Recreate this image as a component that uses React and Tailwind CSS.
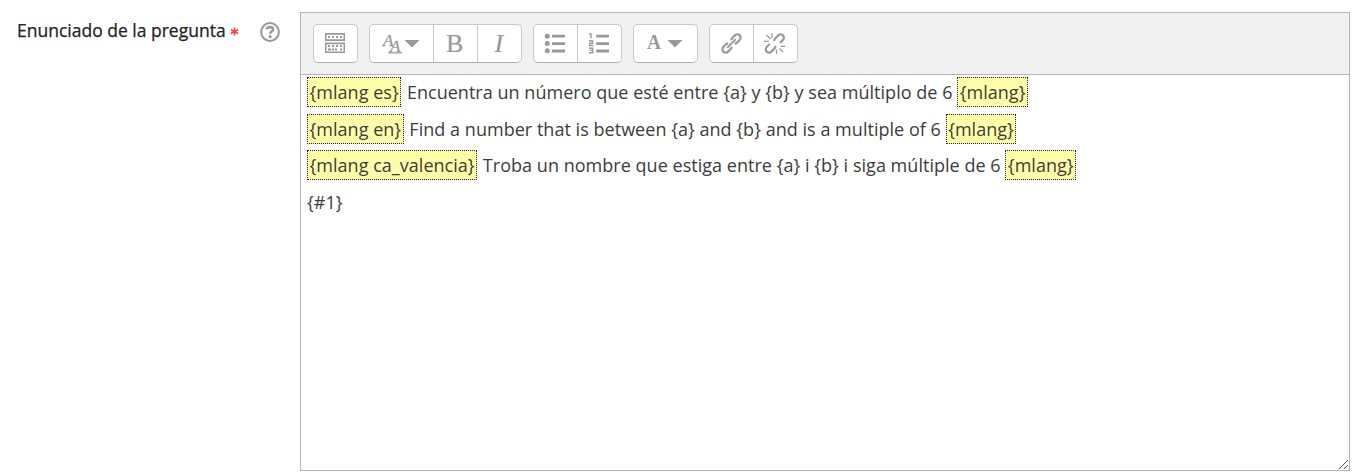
import React from "react";

function Group({ children }) {
  return (
    <div className="flex h-[39px] divide-x divide-[#c8c8c8] overflow-hidden rounded-[5px] border border-[#c8c8c8] border-b-[#b0b0b0] bg-white">
      {children}
    </div>
  );
}

function Button({ label, wide, children }) {
  return (
    <button aria-label={label} className={`flex h-full items-center justify-center pr-[2px] ${wide ? "w-16 last:w-[63px]" : "w-11 last:w-[43px]"}`}>
      <svg className="shrink-0 overflow-visible" width={wide ? 48 : 24} height="24" viewBox={wide ? "0 0 48 24" : "0 0 24 24"} fill="#999" stroke="none">
        {children}
      </svg>
    </button>
  );
}

function Tag({ children }) {
  return <span className="mr-px border border-dotted border-[#222] bg-[#ffffaa] px-[1.5px] pt-[2px] pb-[2px]">{children}</span>;
}

export default function App() {
  return (
    <div className="flex h-[473px] w-[1356px] bg-white pt-3 font-['Open_Sans',sans-serif] text-[#333]">
      <div className="flex w-[300px] shrink-0 items-start pl-[17px]">
        <label className="mt-[5px] whitespace-nowrap text-[17.5px] leading-[26px] text-[#222] [-webkit-text-stroke:0.25px_#222]">Enunciado de la pregunta</label>
        <svg className="mt-[15px] ml-1 shrink-0" width="9" height="9" viewBox="0 0 9 9" stroke="#ff4040" strokeWidth="1.5">
          <path d="M4.5 0.5v8M0.9 2.5l7.2 4M8.1 2.5l-7.2 4" />
        </svg>
        <svg className="mt-[10px] ml-[21px] shrink-0" width="20" height="20" viewBox="0 0 20 20" fill="none" stroke="#999">
          <circle cx="10" cy="10" r="8.9" strokeWidth="2" />
          <path d="M6.8 7.3c.6-3.1 6.3-2.8 6.3.2 0 2.1-3 2-3 4.3" strokeWidth="2.6" />
          <circle cx="10.1" cy="14.7" r="1.6" fill="#999" stroke="none" />
        </svg>
      </div>
      <div className="relative flex h-[459px] w-[1050px] flex-col border border-[#b5b5b5]">
        <div className="flex h-[62px] shrink-0 gap-[11px] border-b border-[#b5b5b5] bg-[#f1f1f1] pt-[11px] pl-3">
          <Group>
            <Button label="Mostrar más botones">
              <path fillRule="evenodd" d="M2 1h20v8H2zM3.5 2.7v4.6h17V2.7zM2 10.5h20V21H2zM3.5 12.2v7.2h17v-7.2z" />
              <path d="M5 4h2v2H5zM9 4h2v2H9zM13 4h2v2h-2zM17 4h2v2h-2zM5 13h2v2H5zM9 13h2v2H9zM13 13h2v2h-2zM17 13h2v2h-2zM5 16.5h3v2H5zM9 16.5h2v2H9zM12 16.5h2v2h-2zM17 16.5h2v2h-2z" />
            </Button>
          </Group>
          <Group>
            <Button label="Estilos de párrafo" wide>
              <text x="6" y="14" fontFamily="Liberation Serif" fontStyle="italic" fontSize="17" stroke="#999" strokeWidth=".3">A</text>
              <text x="13" y="20" fontFamily="Liberation Serif" fontStyle="italic" fontSize="17" stroke="#999" strokeWidth=".3">A</text>
              <path d="M11 20.3h14v1.2H11zM27.5 8h15l-7.5 7.5z" />
            </Button>
            <Button label="Negrita">
              <text x="3" y="20" fontFamily="Liberation Serif" fontSize="26" stroke="#999" strokeWidth=".2">B</text>
            </Button>
            <Button label="Cursiva">
              <text x="7.5" y="20" fontFamily="Liberation Serif" fontStyle="italic" fontSize="26" stroke="#999" strokeWidth=".2">I</text>
            </Button>
          </Group>
          <Group>
            <Button label="Lista sin ordenar">
              <circle cx="4.3" cy="4.2" r="2.5" /><circle cx="4.3" cy="11.5" r="2.5" /><circle cx="4.3" cy="18.8" r="2.5" />
              <path d="M9 2.8h13v2.8H9zM9 10.2h13V13H9zM9 17.6h13v2.8H9z" />
            </Button>
            <Button label="Lista ordenada">
              <path d="M9.2 2.8h12.8v2.8h-12.8zM9.2 10.2h12.8V13h-12.8zM9.2 17.6h12.8v2.8h-12.8z" />
              <path d="M2 2h2v4.5M2 8.7h3.5v2.6H2.8v2.2h3.5M2 16.2h3.7v4.5H2M2.7 18.4h3" fill="none" stroke="#999" strokeWidth="1.4" />
            </Button>
          </Group>
          <Group>
            <Button label="Color de fuente" wide>
              <text x="6" y="17" fontFamily="Liberation Serif" fontWeight="bold" fontSize="21" textLength="14" lengthAdjust="spacingAndGlyphs">A</text>
              <path d="M26.5 8h15l-7.5 7.5z" />
            </Button>
          </Group>
          <Group>
            <Button label="Enlace">
              <g fill="none" stroke="#999" strokeWidth="2.2" transform="translate(.5 -.5) rotate(-45 12 12)">
                <path d="M9.8 9.6A3.3 3.3 0 0 0 7.5 8.7H3.8a3.3 3.3 0 0 0 0 6.6h3.7a3.3 3.3 0 0 0 2.3-.9M14.2 9.6a3.3 3.3 0 0 1 2.3-.9h3.7a3.3 3.3 0 0 1 0 6.6h-3.7a3.3 3.3 0 0 1-2.3-.9" />
                <path d="M6.7 12h10.6" strokeWidth="1.8" strokeLinecap="round" />
              </g>
            </Button>
            <Button label="Desenlazar">
              <g fill="none" stroke="#999" strokeWidth="2.2" transform="translate(-.2 -.5) rotate(-45 12 12)">
                <path d="M8 8.7H3.8a3.3 3.3 0 0 0 0 6.6h4.5a3.3 3.3 0 0 0 2.5-1.4M16 15.3h4.2a3.3 3.3 0 0 0 0-6.6h-4.5a3.3 3.3 0 0 0-2.5 1.4" />
              </g>
              <path d="M9 1v5M3.5 3l4 4M1 9.3h5M13.5 17.5v4.5M16.5 16.5l3.5 3.5M17.5 14.3h4.5" stroke="#999" strokeWidth="1.2" />
            </Button>
          </Group>
        </div>
        <div className="-mt-px whitespace-nowrap pl-[6px] text-[18px] leading-[36.6px] tracking-[0.03px] text-[#3c3c3c]">
          <p><Tag>{"{mlang es}"}</Tag> Encuentra un número que esté entre {"{a}"} y {"{b}"} y sea múltiplo de 6 <Tag>{"{mlang}"}</Tag></p>
          <p><Tag>{"{mlang en}"}</Tag> Find a number that is between {"{a}"} and {"{b}"} and is a multiple of 6 <Tag>{"{mlang}"}</Tag></p>
          <p><Tag>{"{mlang ca_valencia}"}</Tag> Troba un nombre que estiga entre {"{a}"} i {"{b}"} i siga múltiple de 6 <Tag>{"{mlang}"}</Tag></p>
          <p>{"{#1}"}</p>
        </div>
        <svg className="absolute right-px bottom-px" width="9" height="9" viewBox="0 0 9 9" stroke="#555" strokeWidth="1">
          <path d="M0 9L9 0M5 9L9 5" />
        </svg>
      </div>
    </div>
  );
}
